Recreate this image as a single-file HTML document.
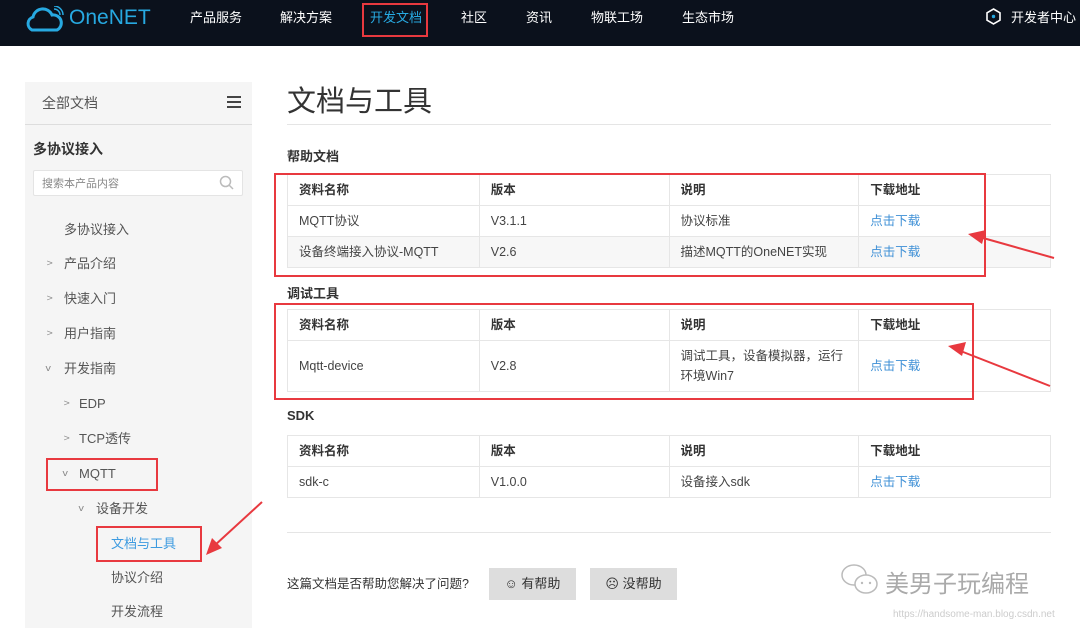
<!DOCTYPE html>
<html><head><meta charset="utf-8"><style>
*{margin:0;padding:0;box-sizing:border-box}
body{width:1080px;height:628px;overflow:hidden;background:#fff;font-family:"Liberation Sans","Noto Sans CJK SC",sans-serif;color:#333;position:relative;font-size:13px}
.a{position:absolute}
.nav{left:0;top:0;width:1080px;height:46px;background:#0b111c}
.nav span{position:absolute;top:7px;color:#fff;font-size:13px}
.red{border:2px solid #e8393f;position:absolute}
table{position:absolute;left:287px;width:764px;border-collapse:collapse;font-size:12.5px;line-height:16px}
td{border:1px solid #e6e6e6;padding:0 11px;height:31px;color:#444;vertical-align:middle}
tr.h td{font-weight:bold;color:#333;height:31px}
tr.g td{background:#f7f7f7}
td.l{color:#3d8fd6}
.side{left:25px;top:82px;width:227px;height:546px;background:#f5f5f5}
.si{position:absolute;font-size:13px;color:#555;line-height:16px}
.ch{position:absolute;font-size:9px;color:#888;transform:scaleX(1.2)}
.btn{position:absolute;top:568px;width:87px;height:32px;background:#ddd;font-size:13px;line-height:32px;text-align:center;color:#333}
</style></head><body>
<div class="a nav">
<svg class="a" style="left:24px;top:6px" width="42" height="28" viewBox="0 0 42 28"><path d="M8 24 A7 7 0 0 1 9 11 A10 10 0 0 1 28 9 A8 8 0 0 1 33 24 Z" fill="none" stroke="#27a9e1" stroke-width="3"/><path d="M30 3 A6 6 0 0 1 36 9 M30 0 A9 9 0 0 1 39 9" fill="none" stroke="#27a9e1" stroke-width="1.5"/></svg>
<span style="left:69px;top:6px;font-size:21px;color:#27a9e1">OneNET</span>
<span style="left:190px">产品服务</span><span style="left:280px">解决方案</span><span style="left:370px;color:#27a9e1">开发文档</span><span style="left:461px">社区</span><span style="left:526px">资讯</span><span style="left:591px">物联工场</span><span style="left:682px">生态市场</span>
<svg class="a" style="left:985px;top:8px" width="17" height="17" viewBox="0 0 17 17"><path d="M8.5 1 L15 4.8 V12.2 L8.5 16 L2 12.2 V4.8Z" fill="none" stroke="#fff" stroke-width="1.6"/><circle cx="8.5" cy="8.5" r="1.7" fill="#27a9e1"/></svg>
<span style="left:1011px">开发者中心</span>
</div>
<div class="red" style="left:362px;top:3px;width:66px;height:34px"></div>

<div class="a side"></div>
<div class="a" style="left:25px;top:124px;width:227px;height:1px;background:#ddd"></div>
<div class="si" style="left:42px;top:95px;font-size:14px">全部文档</div>
<div class="a" style="left:227px;top:96px;width:14px;height:2px;background:#444;box-shadow:0 5px #444,0 10px #444"></div>
<div class="si" style="left:33px;top:141px;font-size:14px;font-weight:bold;color:#333">多协议接入</div>
<div class="a" style="left:33px;top:170px;width:210px;height:26px;background:#fff;border:1px solid #e4e4e4;border-radius:2px"></div>
<div class="si" style="left:42px;top:176px;font-size:11px;color:#888">搜索本产品内容</div>
<svg class="a" style="left:219px;top:175px" width="16" height="16"><circle cx="6.5" cy="6.5" r="5" fill="none" stroke="#bbb" stroke-width="1.5"/><path d="M10 10 L14 14" stroke="#bbb" stroke-width="1.5"/></svg>
<div class="si" style="left:64px;top:222px">多协议接入</div>
<div class="ch" style="left:47px;top:258px">&gt;</div><div class="si" style="left:64px;top:256px">产品介绍</div>
<div class="ch" style="left:47px;top:293px">&gt;</div><div class="si" style="left:64px;top:291px">快速入门</div>
<div class="ch" style="left:47px;top:328px">&gt;</div><div class="si" style="left:64px;top:326px">用户指南</div>
<div class="ch" style="left:46px;top:363px">v</div><div class="si" style="left:64px;top:361px">开发指南</div>
<div class="ch" style="left:64px;top:398px">&gt;</div><div class="si" style="left:79px;top:396px">EDP</div>
<div class="ch" style="left:64px;top:433px">&gt;</div><div class="si" style="left:79px;top:431px">TCP透传</div>
<div class="ch" style="left:63px;top:468px">v</div><div class="si" style="left:79px;top:466px">MQTT</div>
<div class="red" style="left:46px;top:458px;width:112px;height:33px"></div>
<div class="ch" style="left:79px;top:503px">v</div><div class="si" style="left:96px;top:501px">设备开发</div>
<div class="si" style="left:111px;top:536px;color:#3d9be0">文档与工具</div>
<div class="red" style="left:96px;top:526px;width:106px;height:36px"></div>
<div class="si" style="left:111px;top:570px">协议介绍</div>
<div class="si" style="left:111px;top:604px">开发流程</div>
<svg class="a" style="left:200px;top:498px" width="70" height="70"><path d="M62 4 L14 48" stroke="#e8393f" stroke-width="2"/><path d="M6 57 L12 40 L22 50Z" fill="#e8393f"/></svg>

<div class="a" style="left:287px;top:78px;font-size:29px;color:#333">文档与工具</div>
<div class="a" style="left:287px;top:124px;width:764px;height:1px;background:#e5e5e5"></div>
<div class="a" style="left:287px;top:146px;font-size:13px;font-weight:bold">帮助文档</div>
<table style="top:174px"><colgroup><col width="192"><col width="190"><col width="190"><col width="192"></colgroup>
<tr class="h"><td>资料名称</td><td>版本</td><td>说明</td><td>下载地址</td></tr>
<tr><td>MQTT协议</td><td>V3.1.1</td><td>协议标准</td><td class="l">点击下载</td></tr>
<tr class="g"><td>设备终端接入协议-MQTT</td><td>V2.6</td><td>描述MQTT的OneNET实现</td><td class="l">点击下载</td></tr></table>
<div class="red" style="left:274px;top:173px;width:712px;height:104px"></div>
<div class="a" style="left:287px;top:283px;font-size:13px;font-weight:bold">调试工具</div>
<table style="top:309px"><colgroup><col width="192"><col width="190"><col width="190"><col width="192"></colgroup>
<tr class="h"><td>资料名称</td><td>版本</td><td>说明</td><td>下载地址</td></tr>
<tr><td style="height:51px">Mqtt-device</td><td>V2.8</td><td style="line-height:20px">调试工具，设备模拟器，运行环境Win7</td><td class="l">点击下载</td></tr></table>
<div class="red" style="left:274px;top:303px;width:700px;height:97px"></div>
<div class="a" style="left:287px;top:408px;font-size:13px;font-weight:bold">SDK</div>
<table style="top:435px"><colgroup><col width="192"><col width="190"><col width="190"><col width="192"></colgroup>
<tr class="h"><td>资料名称</td><td>版本</td><td>说明</td><td>下载地址</td></tr>
<tr><td>sdk-c</td><td>V1.0.0</td><td>设备接入sdk</td><td class="l">点击下载</td></tr></table>
<svg class="a" style="left:940px;top:220px" width="120" height="180"><path d="M114 38 L36 16" stroke="#e8393f" stroke-width="2"/><path d="M28 14 L46 10 L42 24Z" fill="#e8393f"/><path d="M110 166 L18 130" stroke="#e8393f" stroke-width="2"/><path d="M8 126 L26 122 L22 136Z" fill="#e8393f"/></svg>
<div class="a" style="left:287px;top:532px;width:764px;height:1px;background:#e5e5e5"></div>
<div class="a" style="left:287px;top:573px;font-size:12.5px">这篇文档是否帮助您解决了问题?</div>
<div class="btn" style="left:489px">☺ 有帮助</div>
<div class="btn" style="left:590px">☹ 没帮助</div>
<svg class="a" style="left:840px;top:562px" width="40" height="36"><ellipse cx="14" cy="13" rx="12" ry="10" fill="none" stroke="#bbb" stroke-width="1.5"/><ellipse cx="26" cy="22" rx="11" ry="9" fill="#fff" stroke="#bbb" stroke-width="1.5"/><circle cx="22" cy="21" r="1.2" fill="#bbb"/><circle cx="30" cy="21" r="1.2" fill="#bbb"/></svg>
<div class="a" style="left:885px;top:564px;font-size:24px;color:#aaa">美男子玩编程</div>
<div class="a" style="left:893px;top:609px;font-size:10px;color:#ccc">https://handsome-man.blog.csdn.net</div>
</body></html>
